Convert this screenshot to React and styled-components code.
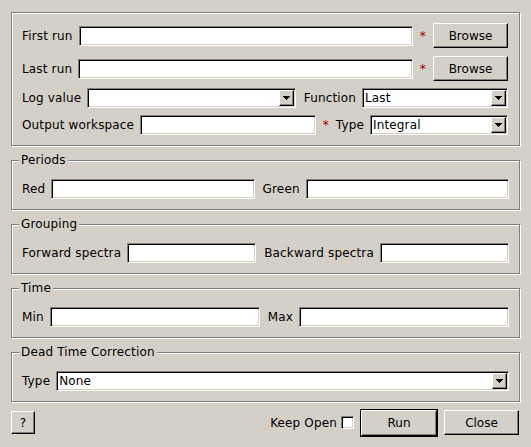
import React from "react";
import styled, { createGlobalStyle } from "styled-components";

const FACE = "#d4d0c8";

const GlobalStyle = createGlobalStyle`
  html, body {
    margin: 0;
    padding: 0;
    background: ${FACE};
  }
  body {
    font-family: "DejaVu Sans", "Liberation Sans", sans-serif;
    font-size: 12px;
    letter-spacing: 0.15px;
    color: #000;
  }
`;

const Dialog = styled.div`
  width: 531px;
  box-sizing: border-box;
  padding: 12px 11px 11px 11px;
  display: flex;
  flex-direction: column;
  gap: 7px;
  background: ${FACE};
`;

const Group = styled.fieldset`
  margin: 0;
  min-width: 0;
  border: 1px solid #808080;
  box-shadow: inset 1px 1px 0 #fff, 1px 1px 0 #fff;
  padding: ${(p) => (p.$titled ? "12px 10px 10px 10px" : "10px 11px 10px 10px")};
  display: flex;
  flex-direction: column;
  gap: 7px;
`;

const Title = styled.legend`
  padding: 0 2px;
  margin-left: -3px;
  line-height: 14px;
  background: ${FACE};
`;

const Row = styled.div`
  display: flex;
  align-items: center;
  gap: 6px;
  height: ${(p) => p.$h || 20}px;
  margin-top: ${(p) => (p.$push ? "1px" : "0")};
`;

const Label = styled.span`
  flex: none;
  white-space: nowrap;
  margin-left: ${(p) => (p.$after ? "2px" : "0")};
`;

const Star = styled.span`
  flex: none;
  margin: 0 1px;
  color: #a00000;
`;

const sunken = `
  border: 1px solid;
  border-color: #808080 #fff #fff #808080;
  box-shadow: inset 1px 1px 0 #000, inset -1px -1px 0 ${FACE};
`;

const raised = `
  border: 1px solid;
  border-color: #fff #000 #000 #fff;
  box-shadow: inset -1px -1px 0 #808080;
  background: ${FACE};
`;

const Field = styled.input`
  box-sizing: border-box;
  height: 20px;
  flex: ${(p) => (p.$w ? `0 0 ${p.$w}px` : "1 1 0")};
  width: 0;
  min-width: 0;
  margin: 0;
  padding: 0 3px;
  font: inherit;
  background: #fff;
  outline: none;
  ${sunken}
`;

const Combo = styled.div`
  box-sizing: border-box;
  height: 20px;
  flex: ${(p) => (p.$w ? `0 0 ${p.$w}px` : "1 1 0")};
  min-width: 0;
  padding: 1px;
  display: flex;
  align-items: stretch;
  background: #fff;
  ${sunken}
`;

const ComboText = styled.span`
  flex: 1;
  padding-left: 1px;
  display: flex;
  align-items: center;
  white-space: nowrap;
  overflow: hidden;
`;

const ArrowButton = styled.span`
  box-sizing: border-box;
  flex: 0 0 15px;
  display: flex;
  align-items: center;
  justify-content: center;
  ${raised}
`;

const Button = styled.button`
  box-sizing: border-box;
  flex: none;
  width: ${(p) => p.$w}px;
  height: ${(p) => p.$h}px;
  margin: 0;
  padding: 0;
  font: inherit;
  color: #000;
  ${raised}
  ${(p) =>
    p.$default &&
    `box-shadow: inset -1px -1px 0 #808080, 0 0 0 1px #000;`}
`;

const Footer = styled.div`
  display: flex;
  align-items: center;
  gap: 7px;
  height: 27px;
  margin-right: 1px;
`;

const KeepOpen = styled.label`
  margin-left: auto;
  display: flex;
  align-items: center;
  gap: 4px;
  white-space: nowrap;
`;

const Check = styled.input`
  appearance: none;
  box-sizing: border-box;
  width: 13px;
  height: 13px;
  margin: 0;
  background: #fff;
  ${sunken}
`;

const Arrow = () => (
  <svg width="7" height="4" viewBox="0 0 7 4" shapeRendering="crispEdges">
    <path d="M0 0h7v1h-1v1h-1v1h-1v1h-1v-1h-1v-1h-1v-1h-1z" fill="#000" />
  </svg>
);

function Select({ value, width }) {
  return (
    <Combo $w={width}>
      <ComboText>{value}</ComboText>
      <ArrowButton>
        <Arrow />
      </ArrowButton>
    </Combo>
  );
}

export default function App() {
  return (
    <>
      <GlobalStyle />
      <Dialog>
        <Group>
          <Row $h={25}>
            <Label>First run</Label>
            <Field />
            <Star>*</Star>
            <Button $w={75} $h={25}>Browse</Button>
          </Row>
          <Row $h={25} $push>
            <Label>Last run</Label>
            <Field />
            <Star>*</Star>
            <Button $w={75} $h={25}>Browse</Button>
          </Row>
          <Row>
            <Label>Log value</Label>
            <Select value="" />
            <Label $after>Function</Label>
            <Select value="Last" width={146} />
          </Row>
          <Row>
            <Label>Output workspace</Label>
            <Field />
            <Star>*</Star>
            <Label>Type</Label>
            <Select value="Integral" width={138} />
          </Row>
        </Group>

        <Group $titled>
          <Title>Periods</Title>
          <Row>
            <Label>Red</Label>
            <Field />
            <Label $after>Green</Label>
            <Field />
          </Row>
        </Group>

        <Group $titled>
          <Title>Grouping</Title>
          <Row>
            <Label>Forward spectra</Label>
            <Field />
            <Label $after>Backward spectra</Label>
            <Field />
          </Row>
        </Group>

        <Group $titled>
          <Title>Time</Title>
          <Row>
            <Label>Min</Label>
            <Field />
            <Label $after>Max</Label>
            <Field />
          </Row>
        </Group>

        <Group $titled>
          <Title>Dead Time Correction</Title>
          <Row>
            <Label>Type</Label>
            <Select value="None" />
          </Row>
        </Group>

        <Footer>
          <Button $w={24} $h={23}>?</Button>
          <KeepOpen>
            Keep Open
            <Check type="checkbox" />
          </KeepOpen>
          <Button $w={76} $h={26} $default>Run</Button>
          <Button $w={75} $h={25}>Close</Button>
        </Footer>
      </Dialog>
    </>
  );
}
